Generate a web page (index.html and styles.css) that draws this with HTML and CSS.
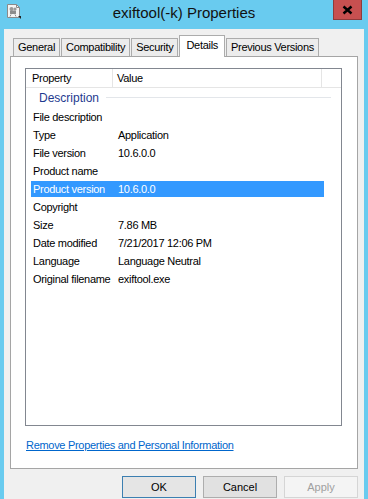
FILE: index.html
```html
<!DOCTYPE html>
<html lang="en">
<head>
	<meta charset="utf-8">
	<title>exiftool(-k) Properties</title>
	<link rel="stylesheet" href="styles.css">
</head>
<body>
	<div class="window">
		<div class="titlebar">
			<svg class="app-icon" width="16" height="16" viewBox="0 0 16 16">
				<path d="M1.5 1.5h9l3 3v10h-12z" fill="#f4f4f4" stroke="#8a8a8a"/>
				<path d="M10.5 1.5v3h3" fill="none" stroke="#8a8a8a"/>
				<circle cx="5.5" cy="6" r="2" fill="#9a9a9a"/>
				<circle cx="9" cy="6" r="1.6" fill="#9a9a9a"/>
				<rect x="4" y="7.5" width="6" height="3.5" rx="0.5" fill="#8c8c8c"/>
				<path d="M5 11.5l-1 2M9 11.5l1 2" stroke="#8c8c8c"/>
				<path d="M12 13h3v3z" fill="#222"/>
			</svg>
			<div class="title">exiftool(-k) Properties</div>
			<div class="close">
				<svg width="11" height="10" viewBox="0 0 11 10">
					<path d="M1.5 1.5l8 7M9.5 1.5l-8 7" stroke="#000" stroke-width="2.4"/>
				</svg>
			</div>
		</div>

		<div class="client">
			<div class="tabs">
				<div class="tab">General</div>
				<div class="tab">Compatibility</div>
				<div class="tab">Security</div>
				<div class="tab current">Details</div>
				<div class="tab">Previous Versions</div>
			</div>

			<div class="panel">
				<div class="listview">
					<div class="lv-head">
						<div class="col-prop">Property</div>
						<div class="col-val">Value</div>
						<div class="col-rest"></div>
					</div>
					<div class="group"><span>Description</span></div>
					<div class="row"><div class="c1">File description</div><div class="c2"></div></div>
					<div class="row"><div class="c1">Type</div><div class="c2">Application</div></div>
					<div class="row"><div class="c1">File version</div><div class="c2">10.6.0.0</div></div>
					<div class="row"><div class="c1">Product name</div><div class="c2"></div></div>
					<div class="row selected"><div class="c1">Product version</div><div class="c2">10.6.0.0</div></div>
					<div class="row"><div class="c1">Copyright</div><div class="c2"></div></div>
					<div class="row"><div class="c1">Size</div><div class="c2">7.86 MB</div></div>
					<div class="row"><div class="c1">Date modified</div><div class="c2">7/21/2017 12:06 PM</div></div>
					<div class="row"><div class="c1">Language</div><div class="c2">Language Neutral</div></div>
					<div class="row"><div class="c1">Original filename</div><div class="c2">exiftool.exe</div></div>
				</div>
				<a class="remove-link" href="#">Remove Properties and Personal Information</a>
			</div>

			<div class="buttons">
				<button class="btn default">OK</button>
				<button class="btn">Cancel</button>
				<button class="btn disabled">Apply</button>
			</div>
		</div>
	</div>
</body>
</html>
```

FILE: styles.css
```css
* {padding: 0; margin: 0; box-sizing: border-box;}
html, body {height: 100%;}
body {
	background: #69cbef;
	font-family: "Liberation Sans", Arial, sans-serif;
	font-size: 11px;
	letter-spacing: -0.3px;
	color: #000;
	overflow: hidden;
}
.window {
	height: 499px;
	display: flex;
	flex-direction: column;
}

/* 标题栏 */
.titlebar {
	height: 29px;
	display: grid;
	grid-template-columns: 1fr auto 1fr;
	align-items: start;
}
.app-icon {
	margin: 3px 0 0 6px;
	justify-self: start;
}
.title {
	margin-top: 3px;
	font-size: 15px;
	line-height: 20px;
	letter-spacing: 0;
	color: #111;
}
.close {
	justify-self: end;
	margin-right: 6px;
	width: 29px;
	height: 20px;
	background: #c75050;
	border: 1px solid #8f3b3b;
	border-top: 0;
	display: flex;
	align-items: center;
	justify-content: center;
}

/* 客户区 */
.client {
	flex: 1;
	margin: 0 4px;
	background: #f0f0f0;
	padding: 6px 6px 0;
}
.tabs {
	height: 21px;
	display: flex;
	align-items: flex-end;
	padding-left: 3px;
}
.tab {
	height: 18px;
	line-height: 16px;
	padding: 0 4px;
	border: 1px solid #acacac;
	border-bottom: 0;
	background: #ececec;
	margin-right: 1px;
	white-space: nowrap;
}
.tab.current {
	height: 22px;
	line-height: 18px;
	background: #fff;
	margin: 0 1px -1px 0;
	padding: 0 6px;
	position: relative;
	z-index: 1;
}

.panel {
	height: 413px;
	background: #fff;
	border: 1px solid #a5a5a5;
	padding: 11px 15px 0 14px;
}
.listview {
	height: 358px;
	border: 1px solid #828790;
}
.lv-head {
	display: flex;
	height: 19px;
	border-bottom: 1px solid #e5e5e5;
	line-height: 18px;
}
.col-prop {
	width: 87px;
	padding-left: 6px;
	border-right: 1px solid #e5e5e5;
}
.col-val {
	width: 209px;
	padding-left: 4px;
	border-right: 1px solid #e5e5e5;
}
.col-rest {flex: 1;}

.group {
	height: 19px;
	display: flex;
	align-items: center;
	padding: 0 10px 0 13px;
	color: #1e3a8f;
	font-size: 12px;
	letter-spacing: 0;
}
.group::after {
	content: "";
	flex: 1;
	height: 1px;
	margin-left: 7px;
	background: #e3e6ea;
}

.row {
	display: flex;
	height: 16px;
	line-height: 16px;
	margin: 2px 0 0 5px;
	width: 293px;
}
.row .c1 {
	width: 87px;
	padding-left: 2px;
	white-space: nowrap;
}
.row .c2 {flex: 1; white-space: nowrap;}
.row.selected {
	background: #3399ff;
	color: #fff;
}

.remove-link {
	display: inline-block;
	margin: 12px 0 0 1px;
	color: #0066cc;
	text-decoration: underline;
	line-height: 14px;
}

.buttons {
	display: flex;
	justify-content: flex-end;
	gap: 7px;
	margin-top: 7px;
}
.btn {
	width: 74px;
	height: 22px;
	font-family: inherit;
	font-size: 11px;
	letter-spacing: 0;
	color: #000;
	background: #e1e1e1;
	border: 1px solid #adadad;
}
.btn.default {
	border-color: #3c7fb1;
	background: #e5e5e5;
}
.btn.disabled {
	color: #a0a0a0;
	background: #f4f4f4;
	border-color: #d5d5d5;
}
```
